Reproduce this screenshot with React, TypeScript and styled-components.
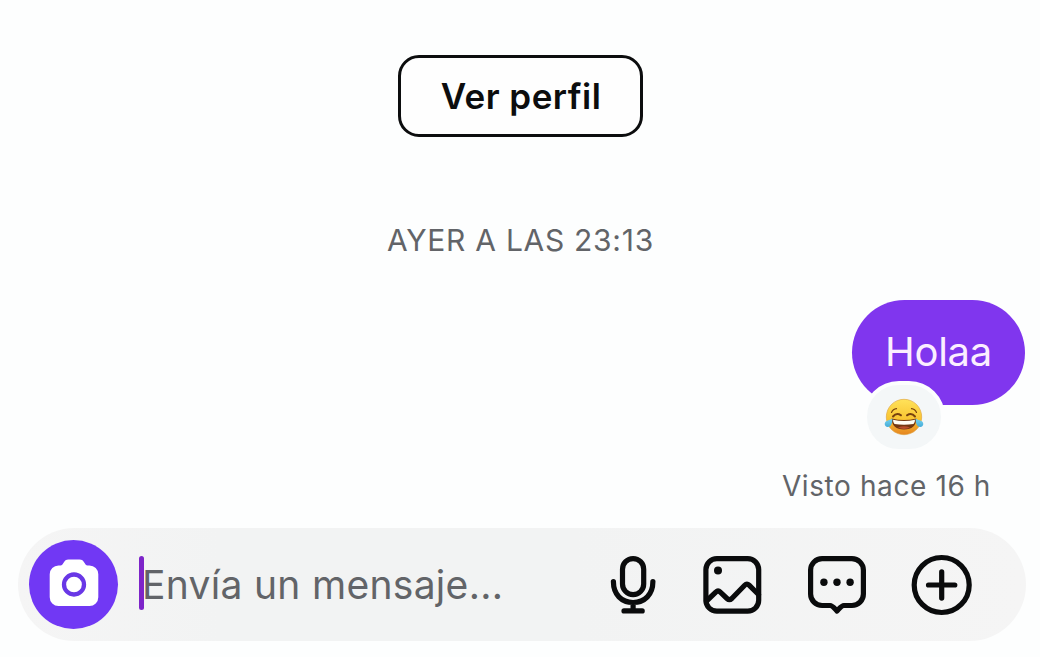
import React from 'react';
import styled, { createGlobalStyle } from 'styled-components';

const GlobalStyle = createGlobalStyle`
  * { box-sizing: border-box; }
  body { margin: 0; background: #fdfefe; font-family: Inter, "Liberation Sans", sans-serif; }
`;

const Screen = styled.main`
  display: flex;
  flex-direction: column;
  width: 1040px;
  height: 657px;
  padding: 55px 14px 16px 18px;
  overflow: hidden;
  background: #fdfefe;
`;

const ProfileButton = styled.button`
  align-self: center;
  width: 245px;
  height: 82px;
  margin-left: -3px;
  padding: 0 0 0 1px;
  border: 3px solid #0c0d0e;
  border-radius: 21px;
  background: #fefefe;
  color: #0c0d0e;
  font: 600 35px/77px Inter, sans-serif;
  letter-spacing: 0.45px;
`;

const DateLabel = styled.div`
  align-self: center;
  margin: 83px 0 0 -3px;
  color: #626468;
  font-size: 30px;
  line-height: 40px;
  letter-spacing: 0.72px;
  white-space: nowrap;
`;

const Message = styled.div`
  position: relative;
  align-self: flex-end;
  margin: 40px 1px 0 0;
`;

const Bubble = styled.div`
  display: flex;
  justify-content: center;
  width: 173px;
  height: 105px;
  border-radius: 53px;
  background: #8036ee;
  color: #fbeeff;
  font-size: 40px;
  line-height: 103px;
  letter-spacing: -0.3px;
`;

const Reaction = styled.div`
  position: absolute;
  left: 11px;
  top: 81px;
  display: flex;
  align-items: center;
  justify-content: center;
  width: 82px;
  height: 72px;
  border: 4px solid #fdfefe;
  border-radius: 37px;
  background: #f4f7f8;
`;

const Seen = styled.div`
  align-self: flex-end;
  margin: 61px 35px 0 0;
  color: #626468;
  font-size: 28px;
  line-height: 40px;
  letter-spacing: 0.6px;
  white-space: nowrap;
`;

const Composer = styled.footer`
  display: flex;
  align-items: center;
  flex-shrink: 0;
  width: 1008px;
  height: 113px;
  margin-top: auto;
  padding: 0 53px 0 11px;
  border-radius: 57px;
  background: linear-gradient(90deg, #f5f5f5, #f2f3f3 20%, #f2f3f3 55%, #f5f5f5);
`;

const CameraButton = styled.button`
  display: flex;
  align-items: center;
  justify-content: center;
  width: 89px;
  height: 89px;
  padding: 0 0 4px;
  border: 0;
  border-radius: 50%;
  background: #7138f4;
`;

const Caret = styled.span`
  width: 5px;
  height: 54px;
  margin: -3px 0 0 21px;
  border-radius: 3px;
  background: #7d24c9;
`;

const Placeholder = styled.span`
  flex: 1;
  margin-left: -2px;
  color: #626468;
  font-size: 39px;
  line-height: 50px;
  letter-spacing: 0.3px;
  white-space: nowrap;
`;

const Actions = styled.div`
  display: flex;
  align-items: center;
  gap: 45px;
`;

const Action = styled.button<{ $width: number }>`
  display: flex;
  width: ${({ $width }) => $width}px;
  height: 60px;
  padding: 0;
  border: 0;
  background: none;
  color: #0a0b0c;
`;

const Glyph = styled.svg`
  display: block;
  flex: none;
  fill: none;
  stroke: currentColor;
  stroke-width: 5.2;
  stroke-linecap: round;
  stroke-linejoin: round;
`;

const LaughingFace = () => (
  <svg width="40" height="38" viewBox="0 0 40 38">
    <defs>
      <linearGradient id="face" x1="0" y1="0" x2="0" y2="1">
        <stop offset="0" stopColor="#ffe25a" />
        <stop offset="0.55" stopColor="#f9c532" />
        <stop offset="1" stopColor="#e58420" />
      </linearGradient>
      <linearGradient id="tear" x1="0" y1="0" x2="0" y2="1">
        <stop offset="0" stopColor="#78d4ee" />
        <stop offset="1" stopColor="#45acd9" />
      </linearGradient>
    </defs>
    <circle cx="20" cy="19" r="17.7" fill="url(#face)" stroke="#dda03b" strokeWidth="0.6" />
    <g fill="none" stroke="#77410f" strokeLinecap="round">
      <path d="M7.5 14.5Q9 11 12.5 10.7M32.5 14.5Q31 11 27.5 10.7" strokeWidth="1.2" />
      <path d="M9 18.5Q12.5 14.3 17 17.3M31 18.5Q27.5 14.3 23 17.3" strokeWidth="2" />
    </g>
    <path d="M7.6 20.5Q20 23.5 32.4 20.5Q32 31.5 20 31.5Q8 31.5 7.6 20.500Z" fill="#74370f" />
    <path d="M9 21.7Q20 24.3 31 21.7Q31 25 29.5 26Q20 27.6 10.5 26Q9 25 9 21.7Z" fill="#fffdf2" />
    <path d="M14 29.600Q20 27 26 29.600Q23.500 30.900 20 30.900Q16.500 30.900 14 29.600Z" fill="#b84e2a" />
    <path d="M8.3 20.5C8.7 25 7 29 3.8 29C.2 29 -.1 24.8 2.2 23.2C4 22 6.5 22 8.3 20.5Z" fill="url(#tear)" />
    <path d="M31.7 20.5C31.3 25 33 29 36.2 29C39.8 29 40.1 24.8 37.8 23.2C36 22 33.5 22 31.7 20.5Z" fill="url(#tear)" />
  </svg>
);

const CameraIcon = () => (
  <svg width="50" height="48" viewBox="0 0 50 48">
    <path d="M9.500 6.500H11.500C13 6.500 13.500 5.500 14.400 4C15.800 1.500 17 .5 19.500 .5H30.500C33 .5 34.200 1.500 35.600 4C36.500 5.500 37 6.500 38.500 6.500H40.500A8.800 8.800 0 0 1 49.300 15.300V38.200A8.800 8.800 0 0 1 40.500 47H9.500A8.800 8.800 0 0 1 .7 38.200V15.300A8.800 8.800 0 0 1 9.500 6.500Z" fill="#fff" />
    <circle cx="25" cy="25.5" r="10" fill="none" stroke="#6937e6" strokeWidth="4.3" />
  </svg>
);

const MicIcon = () => (
  <Glyph width="48" height="60" viewBox="609 555 48 60">
    <rect x="622.5" y="558.6" width="21.2" height="36" rx="10.6" />
    <path d="M613.4 581.5C613.4 594.500 621.5 602.500 633.1 602.500S652.9 594.500 652.9 581.500M633.1 603V610M624 610.9H642.2" />
  </Glyph>
);

const GalleryIcon = () => (
  <Glyph width="60" height="60" viewBox="702 555 60 60">
    <rect x="705.9" y="558.6" width="52.8" height="52.6" rx="11" />
    <circle cx="718" cy="570.4" r="4" fill="currentColor" stroke="none" />
    <path d="M706.5 601L715.8 592.1Q718.1 590 720.3 592.2L727 598.5Q729.4 600.7 731.8 598.5L744.7 585.2Q746.9 583 749.1 585.2L758.5 594.5" />
  </Glyph>
);

const CommentIcon = () => (
  <Glyph width="60" height="60" viewBox="807 555 60 60">
    <path d="M822.1 558.600H851.900A11.500 11.500 0 0 1 863.400 570.100V594A11.500 11.500 0 0 1 851.900 605.500H843.800C841.800 605.500 841.200 606.500 837 611C832.800 606.500 832.200 605.500 830.200 605.500H822.100A11.500 11.500 0 0 1 810.600 594V570.100A11.500 11.500 0 0 1 822.100 558.600Z" />
    <g fill="currentColor" stroke="none">
      <circle cx="823.9" cy="582.3" r="3.7" />
      <circle cx="837" cy="582.3" r="3.7" />
      <circle cx="850.1" cy="582.3" r="3.7" />
    </g>
  </Glyph>
);

const AddIcon = () => (
  <Glyph width="61" height="60" viewBox="912 555 61 60" overflow="visible">
    <circle cx="941.7" cy="585" r="27.5" />
    <path d="M928.5 585H954.800M941.700 571.900V598.100" />
  </Glyph>
);

export default function App() {
  return (
    <>
      <GlobalStyle />
      <Screen>
        <ProfileButton>Ver perfil</ProfileButton>
        <DateLabel>AYER A LAS 23:13</DateLabel>
        <Message>
          <Bubble>Holaa</Bubble>
          <Reaction><LaughingFace /></Reaction>
        </Message>
        <Seen>Visto hace 16 h</Seen>
        <Composer>
          <CameraButton aria-label="Cámara"><CameraIcon /></CameraButton>
          <Caret />
          <Placeholder>Envía un mensaje...</Placeholder>
          <Actions>
            <Action $width={48} aria-label="Audio"><MicIcon /></Action>
            <Action $width={60} aria-label="Galería"><GalleryIcon /></Action>
            <Action $width={60} aria-label="Respuestas"><CommentIcon /></Action>
            <Action $width={61} aria-label="Más"><AddIcon /></Action>
          </Actions>
        </Composer>
      </Screen>
    </>
  );
}
